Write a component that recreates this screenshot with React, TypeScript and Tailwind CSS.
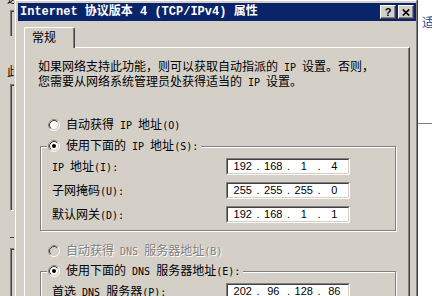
import React from 'react';

// CJK runs keep the CJK face; latin runs get a 6px-wide mono face like the old bitmap font
const CJK = /([\u3000-\u9fff\uff00-\uffef]+)/;

function Txt({ s }: { s: string }) {
  const parts = s.split(CJK).filter(Boolean);
  return (
    <>
      {parts.map((p, i) =>
        CJK.test(p) ? (
          <span key={i}>{p}</span>
        ) : (
          <span key={i} className="font-['DejaVu_Sans_Mono',monospace] text-[10px]">
            {p}
          </span>
        )
      )}
    </>
  );
}

function Radio({ checked, disabled }: { checked?: boolean; disabled?: boolean }) {
  return (
    <svg width="12" height="12" viewBox="0 0 12 12" className="shrink-0">
      <circle cx="6" cy="6" r="4" fill={disabled ? '#d4d0c8' : '#ffffff'} />
      <circle cx="6" cy="6" r="5.5" fill="none" stroke="#ffffff" />
      <path d="M2.11 9.89 A5.5 5.5 0 0 1 9.89 2.11" fill="none" stroke="#808080" />
      <circle cx="6" cy="6" r="4.5" fill="none" stroke="#d4d0c8" />
      <path d="M2.82 9.18 A4.5 4.5 0 0 1 9.18 2.82" fill="none" stroke="#404040" />
      {checked && <circle cx="6" cy="6" r="2" fill="#000000" />}
    </svg>
  );
}

function IpField({ parts }: { parts: string[] }) {
  return (
    <div className="w-[124px] h-[17px] bg-white border border-t-[#808080] border-l-[#808080] border-r-white border-b-white">
      <div className="h-full pl-px flex items-center border border-t-[#404040] border-l-[#404040] border-r-[#d4d0c8] border-b-[#d4d0c8] font-['Liberation_Sans',sans-serif] text-[11px] leading-[13px] text-black">
        {parts.map((p, i) => (
          <React.Fragment key={i}>
            {i > 0 && <div className="w-[3px] flex justify-center">.</div>}
            <div className="w-[28px] text-center">{p}</div>
          </React.Fragment>
        ))}
      </div>
    </div>
  );
}

function Row({ label, parts }: { label: string; parts: string[] }) {
  return (
    <div className="flex items-center h-[17px]">
      <div className="w-[174px] whitespace-nowrap">
        <Txt s={label} />
      </div>
      <IpField parts={parts} />
    </div>
  );
}

function CaptionButton({ children }: { children: React.ReactNode }) {
  return (
    <div className="w-[16px] h-[14px] bg-[#d4d0c8] border border-t-white border-l-white border-r-[#404040] border-b-[#404040] shadow-[inset_-1px_-1px_0_#808080] flex items-center justify-center">
      {children}
    </div>
  );
}

export default function App() {
  return (
    <div className="w-[432px] h-[296px] overflow-hidden flex bg-[#d4d0c8] font-['Noto_Sans_CJK_SC',sans-serif] text-[12px] leading-[12px] text-black">
      {/* window behind, left edge */}
      <div className="w-[14px] shrink-0 flex flex-col overflow-hidden">
        <div className="h-[4px] overflow-hidden pl-[7px]">
          <div className="-mt-[8px]">这</div>
        </div>
        <div className="ml-[10px] mt-[6px] h-[26px] border-l border-t border-[#808080] shadow-[inset_1px_1px_0_#404040]" />
        <div className="ml-[7px] mt-[29px] h-[12px] whitespace-nowrap">此</div>
        <div className="ml-[10px] mt-[7px] h-[127px] border-l border-t border-b border-t-[#808080] border-l-[#808080] border-b-white shadow-[inset_1px_1px_0_#404040]" />
        <div className="ml-[10px] mt-[26px] h-px w-[4px] bg-[#404040]" />
        <div className="ml-[10px] mt-[10px] flex-1 border-l border-t border-[#808080] shadow-[inset_1px_1px_0_#404040]" />
      </div>

      {/* dialog */}
      <div className="w-[404px] shrink-0 pl-px bg-[#d4d0c8] border-r border-r-[#404040]">
        <div className="h-full border-l border-t border-r border-t-white border-l-white border-r-[#808080] pl-[2px] pt-[2px]">
          <div className="h-[18px] bg-[#0a246a] flex items-center pl-[2px] pr-[2px]">
            <div className="flex-1 whitespace-nowrap text-white font-bold font-['Liberation_Mono','Noto_Sans_CJK_SC',monospace] text-[12px] leading-[14px]">
              Internet 协议版本 4 (TCP/IPv4) 属性
            </div>
            <div className="flex gap-[2px]">
              <CaptionButton>
                <span className="font-['Liberation_Sans',sans-serif] font-bold text-[11px] leading-[11px]">?</span>
              </CaptionButton>
              <CaptionButton>
                <svg width="8" height="7" viewBox="0 0 8 7">
                  <path d="M0.8 0.5 L7.2 6.5 M7.2 0.5 L0.8 6.5" stroke="#000000" strokeWidth="1.7" />
                </svg>
              </CaptionButton>
            </div>
          </div>

          <div className="pl-[6px] pr-[6px] pt-[6px]">
            <div className="flex">
              <div className="relative z-10 -mb-px w-[51px] h-[21px] bg-[#d4d0c8] border-t border-l border-r border-t-white border-l-white border-r-[#404040] shadow-[inset_-1px_0_0_#808080] rounded-t-[2px] pl-[7px] pt-[3px]">
                常规
              </div>
            </div>
            <div className="h-[260px] border-t border-l border-r border-t-white border-l-white border-r-[#404040] shadow-[inset_-1px_0_0_#808080] pt-[11px]">
              <div className="pl-[13px] whitespace-nowrap leading-[13px]">
                <div>
                  <Txt s="如果网络支持此功能，则可以获取自动指派的 IP 设置。否则，" />
                </div>
                <div>
                  <Txt s="您需要从网络系统管理员处获得适当的 IP 设置。" />
                </div>
              </div>

              <div className="mt-[29px] pl-[23px] h-[14px] flex items-center gap-[6px] whitespace-nowrap">
                <Radio />
                <span>
                  <Txt s="自动获得 IP 地址(O)" />
                </span>
              </div>

              <fieldset className="mt-[7px] ml-[15px] mr-[13px] p-0 border border-[#808080] shadow-[1px_1px_0_#ffffff,inset_1px_1px_0_#ffffff]">
                <legend className="ml-[6px] pl-px pr-[3px] bg-[#d4d0c8]">
                  <div className="h-[14px] flex items-center gap-[6px] whitespace-nowrap">
                    <Radio checked />
                    <span>
                      <Txt s="使用下面的 IP 地址(S):" />
                    </span>
                  </div>
                </legend>
                <div className="pl-[11px] pt-[5px] pb-[7px] flex flex-col gap-[7px]">
                  <Row label="IP 地址(I):" parts={['192', '168', '1', '4']} />
                  <Row label="子网掩码(U):" parts={['255', '255', '255', '0']} />
                  <Row label="默认网关(D):" parts={['192', '168', '1', '1']} />
                </div>
              </fieldset>

              <div className="mt-[13px] pl-[23px] h-[14px] flex items-center gap-[6px] whitespace-nowrap text-[#808080] [text-shadow:1px_1px_0_#ffffff]">
                <Radio disabled />
                <span>
                  <Txt s="自动获得 DNS 服务器地址(B)" />
                </span>
              </div>

              <fieldset className="mt-[6px] ml-[15px] mr-[13px] p-0 border border-[#808080] shadow-[1px_1px_0_#ffffff,inset_1px_1px_0_#ffffff]">
                <legend className="ml-[6px] pl-px pr-[3px] bg-[#d4d0c8]">
                  <div className="h-[14px] flex items-center gap-[6px] whitespace-nowrap">
                    <Radio checked />
                    <span>
                      <Txt s="使用下面的 DNS 服务器地址(E):" />
                    </span>
                  </div>
                </legend>
                <div className="pl-[11px] pt-[5px] pb-[7px] flex flex-col gap-[7px]">
                  <Row label="首选 DNS 服务器(P):" parts={['202', '96', '128', '86']} />
                  <Row label="备用 DNS 服务器(A):" parts={['', '', '', '']} />
                </div>
              </fieldset>
            </div>
          </div>
        </div>
      </div>

      {/* window behind, right edge */}
      <div className="flex-1 bg-white flex flex-col overflow-hidden">
        <div className="pt-[16px] pl-[4px] h-[123px] whitespace-nowrap text-[#23408e]">适</div>
        <div className="h-px bg-[#808080]" />
      </div>
    </div>
  );
}
